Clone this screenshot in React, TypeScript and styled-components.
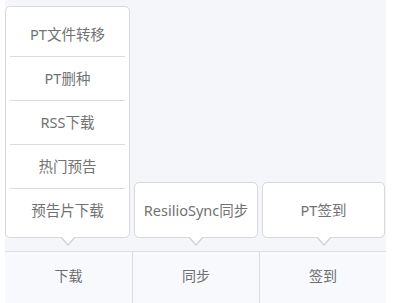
import React from 'react';
import styled, { createGlobalStyle } from 'styled-components';

const GlobalStyle = createGlobalStyle`
  html, body {
    margin: 0;
    padding: 0;
    background: #ffffff;
  }
  body {
    font-family: "Noto Sans", "Noto Sans CJK SC", sans-serif;
  }
`;

const Page = styled.div`
  margin: 0 7px 0 5px;
  height: 303px;
  background: #f5f6fa;
  display: flex;
  flex-direction: column;
  justify-content: flex-end;
`;

const Menus = styled.div`
  display: grid;
  grid-template-columns: repeat(3, 1fr);
  align-items: end;
  padding-bottom: 13px;
`;

const MenuSlot = styled.div<{ $left: number; $right: number }>`
  padding: 0 ${(p) => p.$right}px 0 ${(p) => p.$left}px;
`;

const Popover = styled.div`
  position: relative;
  background: #ffffff;
  border: 1px solid #d8d9dd;
  border-radius: 5px;
  padding: 6px 4px 5px;

  &::before,
  &::after {
    content: '';
    position: absolute;
    left: 50%;
    width: 0;
    height: 0;
    border-style: solid;
  }
  &::before {
    bottom: -9px;
    margin-left: -8px;
    border-width: 9px 8px 0 8px;
    border-color: #cfd0d4 transparent transparent transparent;
  }
  &::after {
    bottom: -7px;
    margin-left: -7px;
    border-width: 8px 7px 0 7px;
    border-color: #ffffff transparent transparent transparent;
  }
`;

const Item = styled.div`
  height: 41px;
  display: flex;
  align-items: center;
  justify-content: center;
  padding-bottom: 2px;
  font-size: 14.5px;
  color: #727272;
  white-space: nowrap;

  & + & {
    border-top: 1px solid #dcdde0;
  }
`;

const TabBar = styled.div`
  display: grid;
  grid-template-columns: repeat(3, 1fr);
  height: 51px;
  border-top: 1px solid #dcdde1;
  background: #f8f9fc;
`;

const Tab = styled.div`
  display: flex;
  align-items: center;
  justify-content: center;
  padding-bottom: 5px;
  font-size: 14px;
  color: #6e6e6e;

  & + & {
    border-left: 1px solid #dcdde1;
  }
`;

const menus = [
  { tab: '下载', items: ['PT文件转移', 'PT删种', 'RSS下载', '热门预告', '预告片下载'], left: 0, right: 2 },
  { tab: '同步', items: ['ResilioSync同步'], left: 2, right: 1 },
  { tab: '签到', items: ['PT签到'], left: 3, right: 1 },
];

const App = () => {
  return (
    <>
      <GlobalStyle />
      <Page>
        <Menus>
          {menus.map((m) => (
            <MenuSlot key={m.tab} $left={m.left} $right={m.right}>
              <Popover>
                {m.items.map((it) => (
                  <Item key={it}>{it}</Item>
                ))}
              </Popover>
            </MenuSlot>
          ))}
        </Menus>
        <TabBar>
          {menus.map((m) => (
            <Tab key={m.tab}>{m.tab}</Tab>
          ))}
        </TabBar>
      </Page>
    </>
  );
};

export default App;
